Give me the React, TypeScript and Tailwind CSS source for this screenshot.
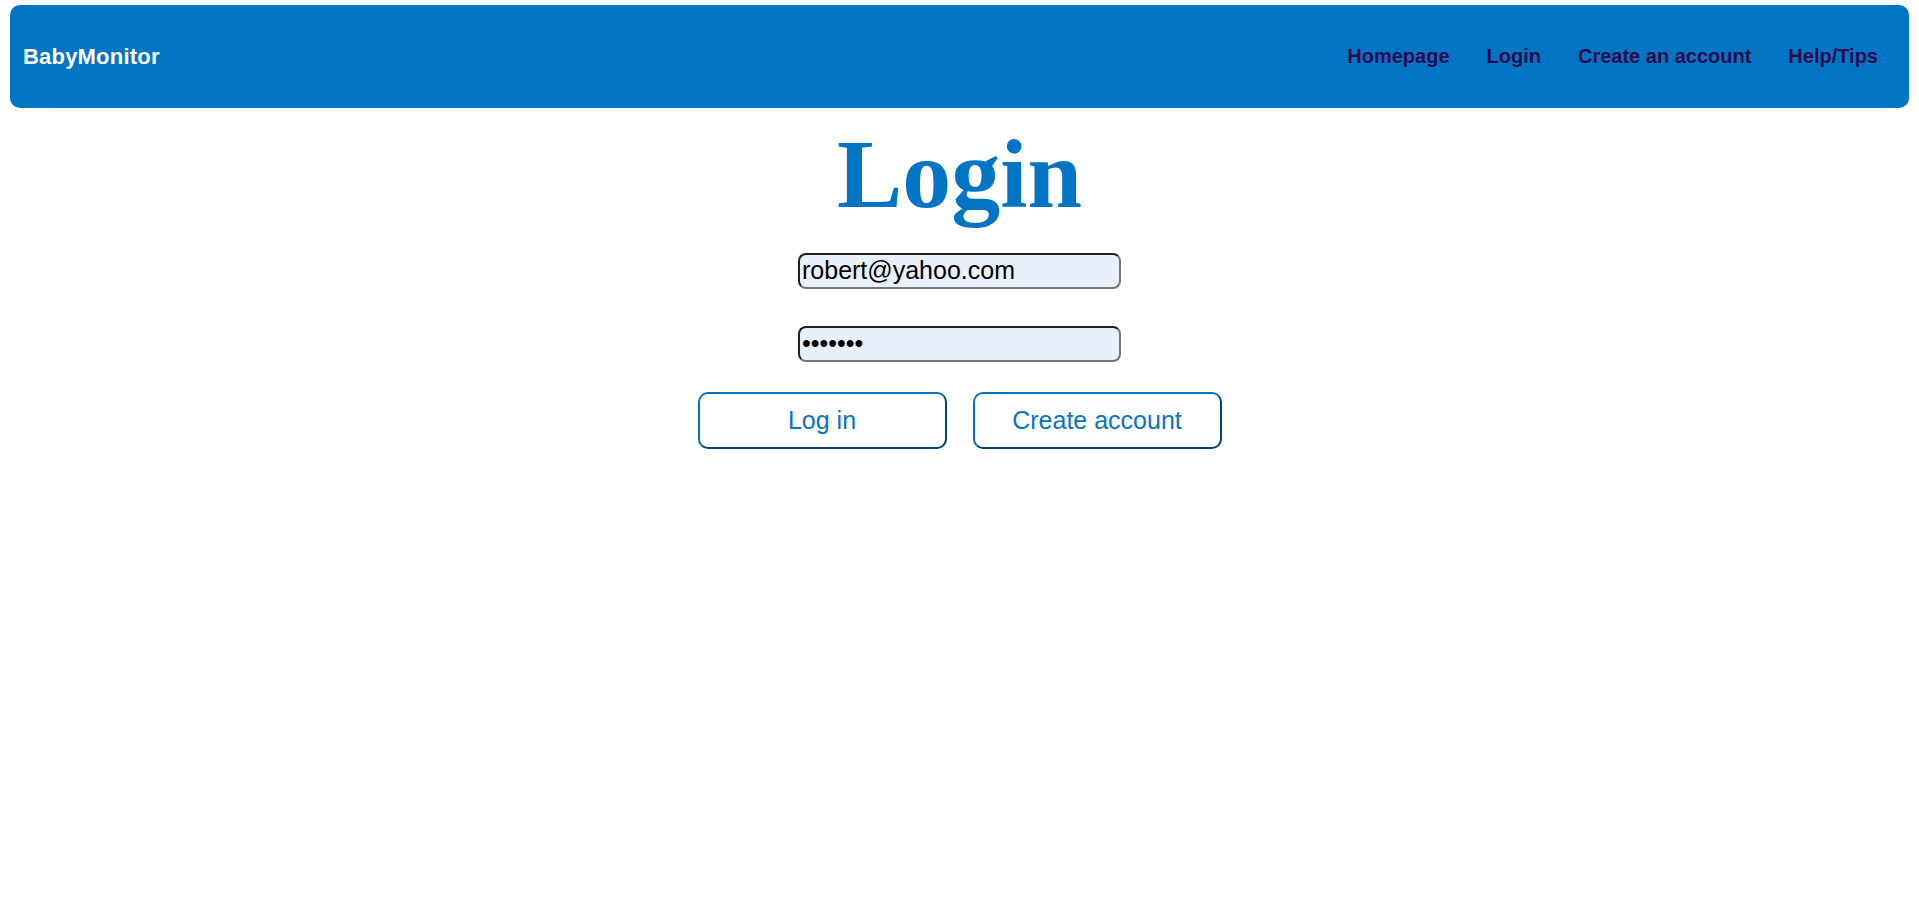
import { useState } from "react";

const links = ["Homepage", "Login", "Create an account", "Help/Tips"];

export default function App() {
  const [email, setEmail] = useState("robert@yahoo.com");
  const [password, setPassword] = useState("1234567");

  return (
    <div className="min-h-screen bg-white font-['Liberation_Sans',Arial,sans-serif]">
      {/* Navbar */}
      <nav className="mx-[10px] mt-[5px] h-[103px] rounded-[10px] bg-[#0075c3] flex items-center justify-between pl-[13px] pr-[31px]">
        <span className="text-white font-bold text-[22px] tracking-[0.2px]">
          BabyMonitor
        </span>
        <ul className="flex items-center gap-[37px] -mt-[2px]">
          {links.map((l) => (
            <li key={l}>
              <a href="#" className="text-[20px] font-bold text-[#2a0a4f]">
                {l}
              </a>
            </li>
          ))}
        </ul>
      </nav>

      {/* Login form */}
      <div className="flex flex-col items-center">
        <h1 className="mt-[18px] font-['Liberation_Serif','Times_New_Roman',serif] font-bold text-[98px] leading-[96px] text-[#0075c3]">
          Login
        </h1>

        <input
          type="email"
          value={email}
          onChange={(e) => setEmail(e.target.value)}
          className="mt-[31px] w-[323px] h-[36px] px-[2px] text-[25px] text-black bg-[#e8f0fe] border-2 border-t-[#1f1f1f] border-l-[#1f1f1f] border-b-[#767676] border-r-[#767676] rounded-[8px] outline-none"
        />
        <input
          type="password"
          value={password}
          onChange={(e) => setPassword(e.target.value)}
          className="mt-[37px] w-[323px] h-[36px] px-[2px] text-[25px] text-black bg-[#e8f0fe] border-2 border-t-[#1f1f1f] border-l-[#1f1f1f] border-b-[#767676] border-r-[#767676] rounded-[8px] outline-none"
        />

        <div className="mt-[30px] flex gap-[26px]">
          <button className="w-[249px] h-[57px] bg-white rounded-[10px] border-2 border-t-[#0073c0] border-l-[#0073c0] border-b-[#00437a] border-r-[#00437a] text-[25px] text-[#0a74c2]">
            Log in
          </button>
          <button className="w-[249px] h-[57px] bg-white rounded-[10px] border-2 border-t-[#0073c0] border-l-[#0073c0] border-b-[#00437a] border-r-[#00437a] text-[25px] text-[#0a74c2]">
            Create account
          </button>
        </div>
      </div>
    </div>
  );
}
